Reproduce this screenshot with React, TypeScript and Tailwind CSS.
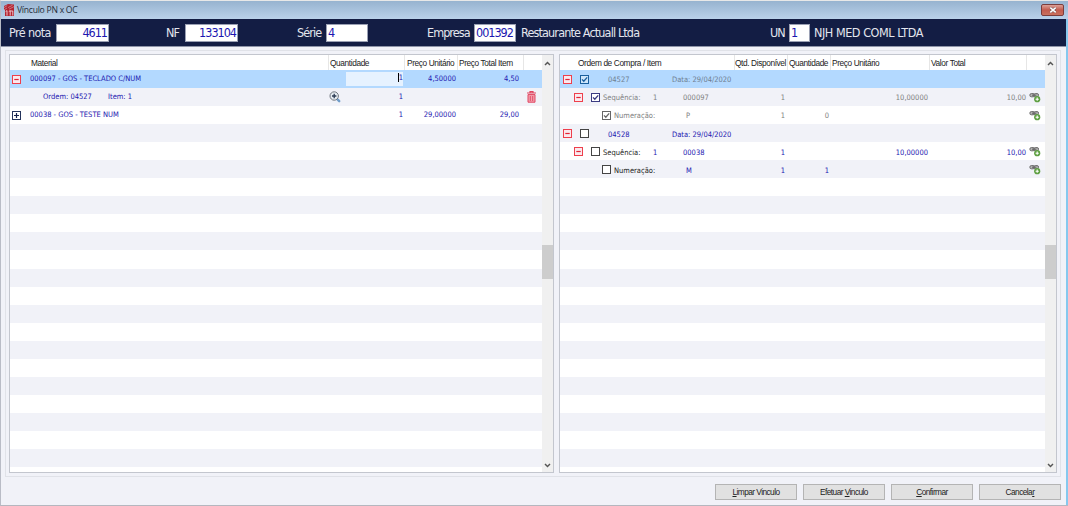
import type { ReactNode } from "react"

const STRIPES = 22

const Field = ({ className, children }: { className: string; children: ReactNode }) => (
  <div
    className={`h-[18px] border border-[#9aa0b4] bg-white text-[#1c17b0] leading-[15px] tracking-[-1px] shrink-0 ${className}`}
  >
    {children}
  </div>
)

const Toggle = ({ open = false }: { open?: boolean }) => (
  <svg width="9" height="9" viewBox="0 0 9 9" className="shrink-0">
    <rect
      x="0.5"
      y="0.5"
      width="8"
      height="8"
      fill={open ? "#fbe9ee" : "#fff"}
      stroke={open ? "#ee3f4c" : "#24345c"}
    />
    <path d={open ? "M2.3 4.5h4.4" : "M2 4.5h5M4.5 2v5"} stroke={open ? "#e02436" : "#14224c"} strokeWidth="1.2" />
  </svg>
)

const Check = ({ color = "#444", fill = "#fff", checked = false }: { color?: string; fill?: string; checked?: boolean }) => (
  <svg width="9" height="9" viewBox="0 0 9 9" className="shrink-0">
    <rect x="0.5" y="0.5" width="8" height="8" fill={fill} stroke={color} />
    {checked && <path d="M2 4.4l1.8 1.9L7.2 2.4" fill="none" stroke={color} strokeWidth="1.3" />}
  </svg>
)

const LinkAdd = () => (
  <svg width="12" height="11" viewBox="0 0 12 11" className="mr-[4px] shrink-0">
    <rect x="0.9" y="1.6" width="4.6" height="3.2" rx="1.4" fill="#b4b4b4" stroke="#6a6a6a" />
    <rect x="4.9" y="1.6" width="4.6" height="3.2" rx="1.4" fill="#b4b4b4" stroke="#6a6a6a" />
    <path d="M3 3.2h4.4" stroke="#555" strokeWidth="0.9" />
    <circle cx="8.2" cy="7.2" r="3.1" fill="#5fa043" />
    <path d="M6.6 7.2h3.2M8.2 5.6v3.2" stroke="#fff" strokeWidth="1.1" />
  </svg>
)

const Magnifier = () => (
  <svg width="12" height="12" viewBox="0 0 12 12" className="shrink-0">
    <path d="M8.2 8.2l2 2" stroke="#6f9cc9" strokeWidth="2.4" strokeLinecap="round" />
    <circle cx="5.2" cy="5" r="4.2" fill="#e4ebf1" stroke="#70767e" />
    <path d="M3 5h4.4M5.2 2.8v4.4" stroke="#2b3a52" strokeWidth="1.3" />
  </svg>
)

const Trash = () => (
  <svg width="9" height="12" viewBox="0 0 9 12" className="shrink-0">
    <path d="M0 2h9M3 1.5V.6h3v.9" fill="none" stroke="#e04560" strokeWidth="1.2" />
    <path d="M1 3.6h7v7.6H1z" fill="#f3a0ae" stroke="#e04560" />
    <path d="M3.3 5v5M5.7 5v5" stroke="#e04560" strokeWidth="0.9" />
  </svg>
)

const Logo = () => (
  <svg width="10" height="12" viewBox="0 0 10 12" className="shrink-0">
    <path d="M0 2L4 0L10 .5V12H1V6L0 6z" fill="#b32430" />
    <path d="M0 3.6L3.2 1.6M4 3.6L8.6 1.2M5 5.2L10 2.6M0 5.8L3 4" stroke="#dda7b2" strokeWidth="0.6" />
    <path d="M1.6 7.6L3 6.6V11.6M4.8 7.6L6.2 6.6V11.6M6.2 7H8.8V11.6" fill="none" stroke="#f0d3da" strokeWidth="0.9" />
  </svg>
)

const Scrollbar = () => (
  <div className="flex w-[11px] shrink-0 flex-col items-center bg-[#f0f0f0] pt-[6px] pb-[4px]">
    <svg width="7" height="5" viewBox="0 0 7 5">
      <path d="M1 4l2.5-2.6L6 4" fill="none" stroke="#555" strokeWidth="1.4" />
    </svg>
    <div className="mt-[179px] h-[34px] w-full bg-[#cdcdcd]" />
    <svg width="7" height="5" viewBox="0 0 7 5" className="mt-auto">
      <path d="M1 1l2.5 2.6L6 1" fill="none" stroke="#555" strokeWidth="1.4" />
    </svg>
  </div>
)

const HeadRow = ({ children }: { children: ReactNode }) => (
  <div className="flex h-[15px] font-['Liberation_Sans',Arial,sans-serif] text-[8.3px] leading-[16px] tracking-[-0.38px] text-[#222]">
    {children}
  </div>
)

const HeadCell = ({ className, text }: { className: string; text: string }) => (
  <div className={`shrink-0 border-r border-[#e6e6e6] whitespace-nowrap ${className}`}>{text}</div>
)

const Num = ({ className, children }: { className: string; children?: ReactNode }) => (
  <div className={`shrink-0 text-right ${className}`}>{children}</div>
)

const Rows = ({ rows }: { rows: ReactNode[] }) => (
  <div>
    {Array.from({ length: STRIPES }, (_, i) => (
      <div
        key={i}
        className={`flex h-[18.05px] items-center whitespace-nowrap ${
          i === 0 ? "bg-[#b3d9ff]" : i % 2 ? "bg-[#f1f2f8]" : "bg-white"
        }`}
      >
        {rows[i]}
      </div>
    ))}
  </div>
)

const materialRows = [
  <>
    <div className="flex w-[336px] items-center gap-[9px] pl-[2px]">
      <Toggle open />
      <span>000097 - GOS - TECLADO C/NUM</span>
    </div>
    <div className="flex h-[14px] w-[57px] justify-end bg-[#e6f2ff] leading-[12px]">
      <span className="mt-px h-[9px] border-l border-black leading-[9px]">1</span>
    </div>
    <Num className="w-[53px]">4,50000</Num>
    <Num className="w-[63px]">4,50</Num>
  </>,
  <>
    <span className="w-[64px] pl-[33px]">Ordem: 04527</span>
    <span className="w-[255px] pl-[34px]">Item: 1</span>
    <Magnifier />
    <Num className="w-[62px]">1</Num>
    <Num className="mr-[6px] ml-auto">
      <Trash />
    </Num>
  </>,
  <>
    <div className="flex w-[336px] items-center gap-[9px] pl-[2px]">
      <Toggle />
      <span>00038 - GOS - TESTE NUM</span>
    </div>
    <Num className="w-[57px]">1</Num>
    <Num className="w-[53px]">29,00000</Num>
    <Num className="w-[63px]">29,00</Num>
  </>,
]

type OrderProps = { code: string; checked?: boolean }

const OrderRow = ({ code, checked }: OrderProps) => (
  <div className={`flex items-center pl-[3px] ${checked ? "text-[#6f7f92]" : "text-[#1c17b0]"}`}>
    <Toggle open />
    <div className="ml-[8px] flex w-[28px]">
      <Check checked={checked} color={checked ? "#1a5f9e" : "#444"} fill={checked ? "#cfe6fa" : "#fff"} />
    </div>
    <span className="w-[64px] pt-[2px]">{code}</span>
    <span className="pt-[2px]">Data: 29/04/2020</span>
  </div>
)

const SequenceRow = ({ code, checked }: OrderProps) => (
  <div className={`flex grow items-center pl-[14px] ${checked ? "text-[#808080]" : "text-[#1c17b0]"}`}>
    <Toggle open />
    <div className="ml-[8px] flex w-[12px]">
      <Check checked={checked} color={checked ? "#3b3b82" : "#444"} />
    </div>
    <div className="flex grow pt-[2px]">
      <span className={`w-[50px] ${checked ? "" : "text-[#222]"}`}>Sequência:</span>
      <span className="w-[30px]">1</span>
      <span className="w-[92px]">{code}</span>
      <Num className="w-[10px]">1</Num>
      <Num className="w-[143px]">10,00000</Num>
      <Num className="w-[98px]">10,00</Num>
    </div>
    <LinkAdd />
  </div>
)

const SizeRow = ({ size, amount, checked }: { size: string; amount: string; checked?: boolean }) => (
  <div className={`flex grow items-center pl-[42px] ${checked ? "text-[#808080]" : "text-[#1c17b0]"}`}>
    <div className="flex w-[12px]">
      <Check checked={checked} color={checked ? "#666" : "#444"} />
    </div>
    <div className="flex grow pt-[2px]">
      <span className={`w-[72px] ${checked ? "" : "text-[#222]"}`}>Numeração:</span>
      <span className="w-[89px]">{size}</span>
      <Num className="w-[10px]">1</Num>
      <Num className="w-[44px]">{amount}</Num>
    </div>
    <LinkAdd />
  </div>
)

const orderRows = [
  <OrderRow code="04527" checked />,
  <SequenceRow code="000097" checked />,
  <SizeRow size="P" amount="0" checked />,
  <OrderRow code="04528" />,
  <SequenceRow code="00038" />,
  <SizeRow size="M" amount="1" />,
]

const Button = ({ children }: { children: ReactNode }) => (
  <button className="h-[16px] w-[82px] border border-[#b4b4b4] bg-[#e1e1e1] text-[8.3px] leading-[14px] tracking-[-0.55px] text-[#222]">
    {children}
  </button>
)

const App = () => {
  return (
    <div className="flex h-[506px] w-[1068px] flex-col overflow-hidden border-t border-b border-l border-t-[#e8e8e8] border-b-[#b5b7bf] border-l-[#b9bcc6] bg-[#f1f2f8] font-['DejaVu_Sans_Condensed','DejaVu_Sans',sans-serif] text-[7.5px] text-[#1c17b0]">
      <div className="flex h-[18px] shrink-0 items-center justify-between bg-linear-to-b from-[#97b3cf] to-[#bad1ea] pr-[4px] pl-[3px]">
        <div className="flex items-center gap-[3px]">
          <Logo />
          <span className="font-['Open_Sans',sans-serif] text-[8.6px] leading-[14px] tracking-[-0.25px] text-[#252c38]">
            Vínculo PN x OC
          </span>
        </div>
        <div className="mb-[1px] flex h-[12px] w-[23px] items-center justify-center rounded-[2px] border border-[#7b3d3c] bg-linear-to-b from-[#dba097] via-[#c35b4e] to-[#c9705e]">
          <svg width="8" height="6" viewBox="0 0 8 6">
            <path d="M1.3.7l5.4 4.6M6.7.7L1.3 5.3" stroke="#6b4a4a" strokeWidth="2.6" />
            <path d="M1.3.7l5.4 4.6M6.7.7L1.3 5.3" stroke="#fff" strokeWidth="1.7" />
          </svg>
        </div>
      </div>

      <div className="flex grow border-r-2 border-[#86c8ee]">
        <div className="flex grow flex-col">
          <div className="flex h-[28px] shrink-0 items-center border-b border-[#8e94a8] bg-[#131d44] text-[12.5px] leading-[18px] tracking-[-0.6px] whitespace-nowrap text-[#e4e6ee]">
            <span className="w-[48px] pl-[8px]">Pré nota</span>
            <Field className="ml-[7px] w-[53px] pr-px text-right">4611</Field>
            <span className="w-[76px] pl-[57px] tracking-[-1px]">NF</span>
            <Field className="w-[53px] pr-px text-right">133104</Field>
            <span className="w-[88px] pl-[59px] tracking-[-0.9px]">Série</span>
            <Field className="w-[42px] pl-px">4</Field>
            <span className="w-[106px] pl-[59px] tracking-[-0.95px]">Empresa</span>
            <Field className="w-[42px] pl-px">001392</Field>
            <span className="w-[254px] pl-[5px] tracking-[-0.85px]">Restaurante Actuall Ltda</span>
            <span className="w-[19px] tracking-[-0.9px]">UN</span>
            <Field className="w-[21px] pl-px">1</Field>
            <span className="pl-[4px] tracking-[-0.45px]">NJH MED COML LTDA</span>
          </div>

          <div className="mt-[3px] ml-[4px] flex h-[427px] w-[1056px] gap-[5px] border border-[#e0e2e8] p-[3px]">
            <div className="flex w-[545px] shrink-0 border border-[#c3c6ce] bg-white">
              <div className="grow">
                <HeadRow>
                  <HeadCell className="w-[319px] pl-[21px]" text="Material" />
                  <HeadCell className="w-[76px] pl-px" text="Quantidade" />
                  <HeadCell className="w-[53px] pl-[2px]" text="Preço Unitário" />
                  <HeadCell className="w-[66px] pl-px" text="Preço Total Item" />
                </HeadRow>
                <Rows rows={materialRows} />
              </div>
              <Scrollbar />
            </div>

            <div className="flex grow border border-[#c3c6ce] bg-white">
              <div className="grow">
                <HeadRow>
                  <HeadCell className="w-[175px] pl-[18px]" text="Ordem de Compra / Item" />
                  <HeadCell className="w-[53px]" text="Qtd. Disponível" />
                  <HeadCell className="w-[43px] pl-px" text="Quantidade" />
                  <HeadCell className="w-[99px] pl-px" text="Preço Unitário" />
                  <HeadCell className="w-[97px] pl-px" text="Valor Total" />
                </HeadRow>
                <Rows rows={orderRows} />
              </div>
              <Scrollbar />
            </div>
          </div>

          <div className="mt-[7px] mr-[5px] flex justify-end gap-[6px] font-['Liberation_Sans',Arial,sans-serif]">
            <Button>
              <u>L</u>impar Vinculo
            </Button>
            <Button>
              Efetuar <u>V</u>inculo
            </Button>
            <Button>
              <u>C</u>onfirmar
            </Button>
            <Button>
              Cancela<u>r</u>
            </Button>
          </div>
        </div>
      </div>
    </div>
  )
}

export default App
